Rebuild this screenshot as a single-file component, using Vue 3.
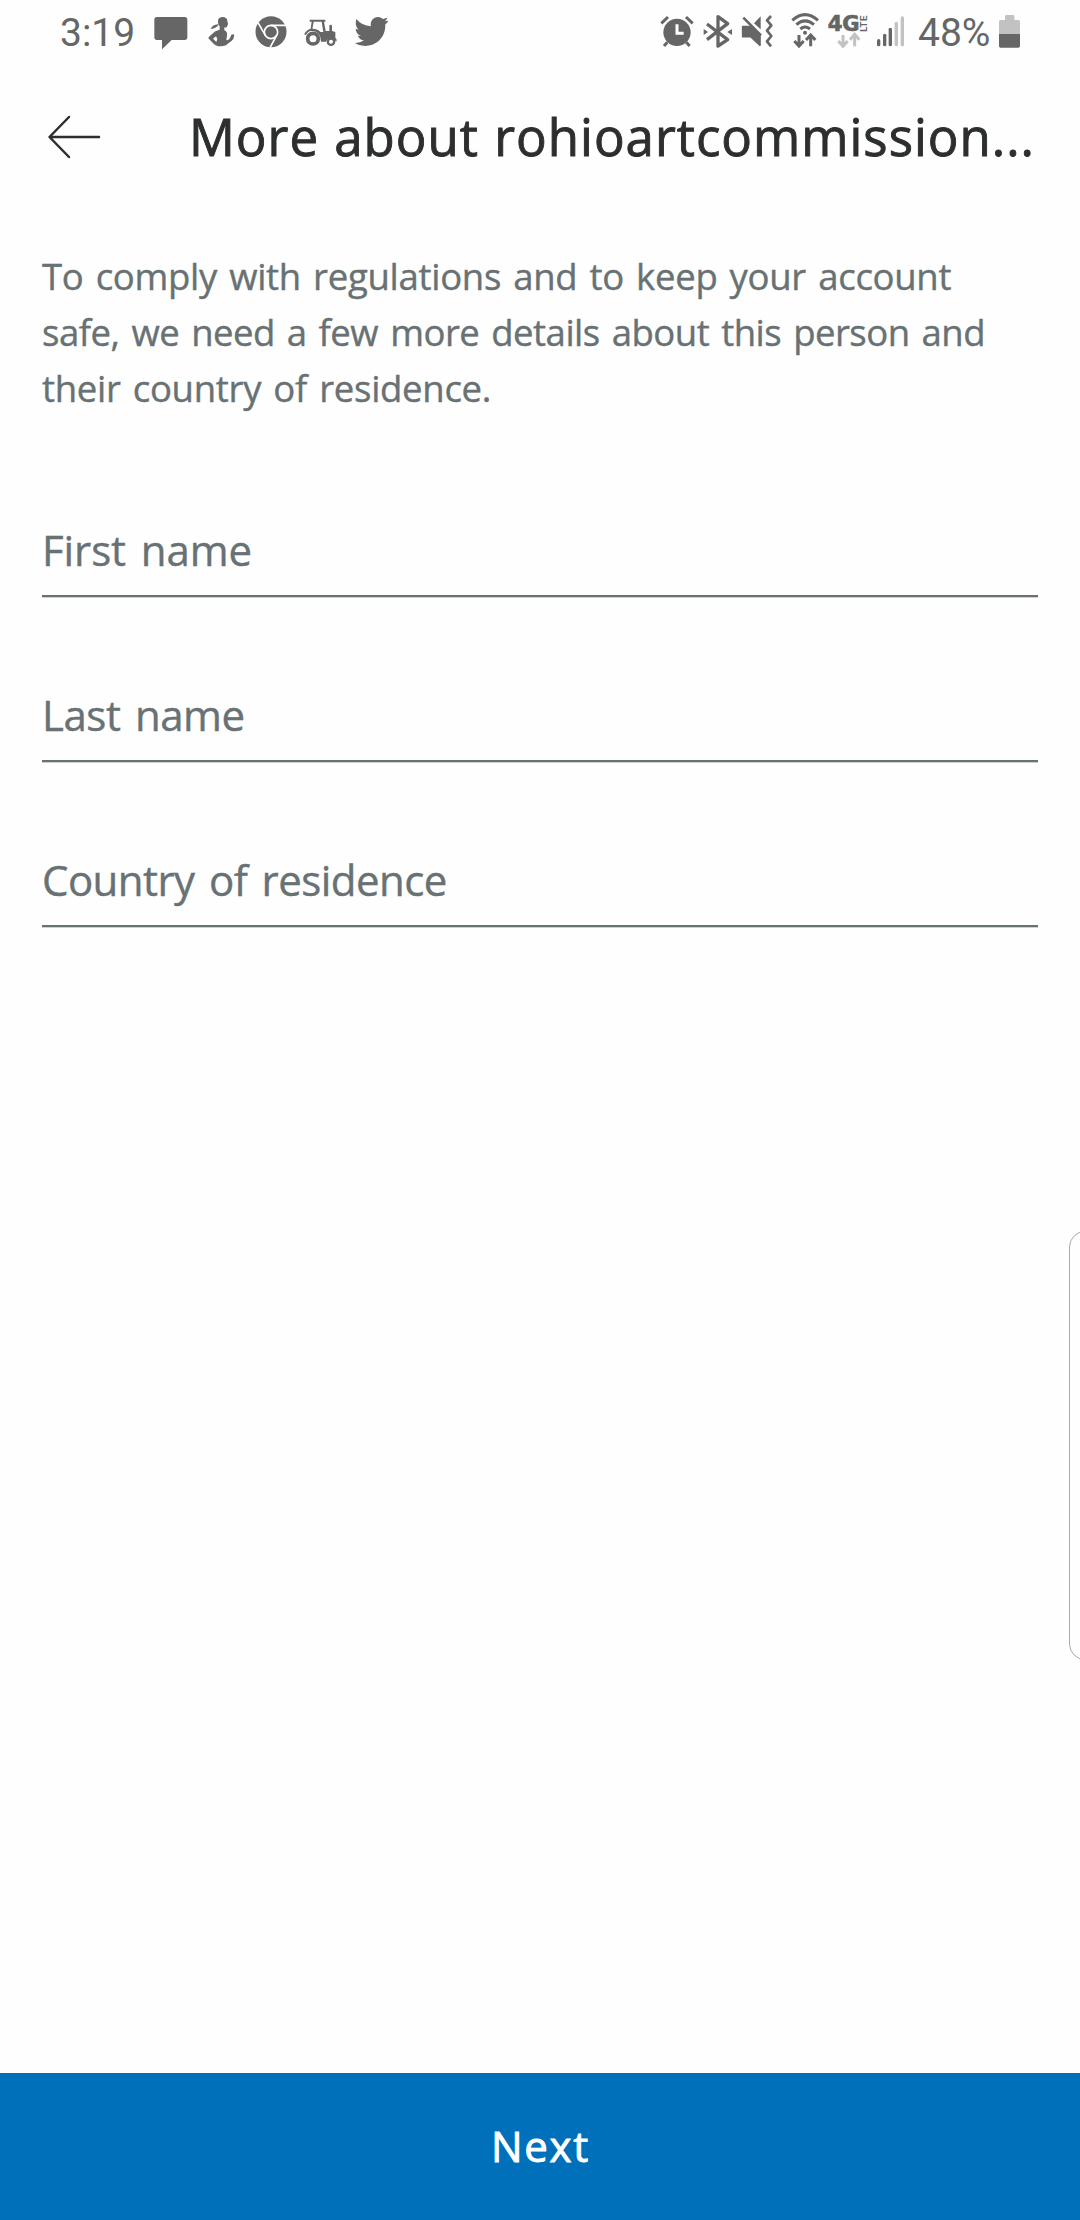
<script setup>
import { reactive } from "vue";

const form = reactive({
  firstName: "",
  lastName: "",
  country: "",
});

const fields = [
  { key: "firstName", label: "First name" },
  { key: "lastName", label: "Last name" },
  { key: "country", label: "Country of residence" },
];

// signal bars: x, top, active
const bars = [
  { x: 176, y: 122, on: true },
  { x: 194, y: 106, on: true },
  { x: 211, y: 88, on: true },
  { x: 229, y: 70, on: false },
  { x: 247, y: 54, on: false },
];
</script>

<template>
  <div class="screen">
    <!-- status bar -->
    <div class="status">
      <div class="group left">
        <span class="time">3:19</span>
        <!-- message -->
        <svg width="46" height="66" viewBox="324 0 138 198">
          <path d="M351 51H434Q442 51 442 59V112Q442 120 434 120H395L366 148V120H351Q343 120 343 112V59Q343 51 351 51Z" />
        </svg>
        <!-- person -->
        <svg width="46" height="66" viewBox="462 0 138 198">
          <path d="M534 62C534 47 562 47 562 62L564 72L561 80Q556 84 553 82L553 91Q563 95 561 106L559 121Q568 121 571 112L574 104Q580 101 583 106L580 117Q574 125 566 129Q557 139 543 139Q526 139 518 128L505 115L507 110L526 94L539 89L539 79Q533 74 534 62ZM528 109L519 116L529 126L532 117Z" />
          <path d="M537 72Q530 86 512 87Q518 74 534 73Z" />
        </svg>
        <!-- chrome -->
        <svg width="57" height="66" viewBox="30 0 171 198">
          <circle cx="123" cy="95" r="46.500" />
          <g fill="none" stroke="#fff" stroke-width="5">
            <circle cx="123" cy="96" r="20" />
            <path d="M123 76H168M106 106L84 68M140 106L120 143" />
          </g>
        </svg>
        <!-- tractor -->
        <svg width="48" height="66" viewBox="201 0 144 198">
          <path d="M239 59H286V65H282L287 93H298V77Q298 74 302 74T306 77V93L316 96V113Q321 117 320 124H317A16 16 0 0 0 288 125H273Q272 90 241 92L245 65H239ZM251 65L247 88Q263 87 271 96H280L275 65Z" fill-rule="evenodd" />
          <path d="M225 104Q232 88 250 89Q266 91 272 105" fill="none" stroke="#666" stroke-width="6" />
          <circle cx="249" cy="116" r="16" fill="#fff" stroke="#666" stroke-width="11" />
          <circle cx="303" cy="125" r="9.500" fill="#fff" stroke="#666" stroke-width="7" />
        </svg>
        <!-- bird -->
        <svg width="55" height="66" viewBox="345 0 165 198">
          <path d="M379 57Q395 77 423 79C419 64 430 51 444 51Q452 51 459 57L472 53Q470 60 464 64L475 62Q472 69 466 73C467 113 439 138 405 138Q388 138 374 129Q390 130 402 121Q388 119 384 107H393Q378 102 377 86L386 89Q373 78 379 57Z" />
        </svg>
      </div>
      <div class="group">
        <!-- alarm -->
        <svg width="48" height="66" viewBox="0 0 144 198">
          <g stroke="#666" stroke-width="9" fill="none">
            <path d="M34 70L54 51M108 51L128 70M52 127L42 138M109 127L119 138" />
          </g>
          <circle cx="81" cy="97" r="41" />
          <path d="M81 73V100H101" fill="none" stroke="#fff" stroke-width="9" />
        </svg>
        <!-- bluetooth -->
        <svg width="38" height="66" viewBox="144 0 114 198">
          <path d="M171 72L233 119L204 138V50L233 71L171 119" fill="none" stroke="#666" stroke-width="10" stroke-linejoin="round" />
          <path d="M161 87L174 96L161 105ZM246 87L232 96L246 105Z" />
        </svg>
        <!-- muted / vibrate -->
        <svg width="44" height="66" viewBox="258 0 132 198">
          <path d="M312 70L332 49V88Z" />
          <path d="M278 80H305L330 106V136L302 110H278Z" stroke="#666" stroke-width="5" stroke-linejoin="round" />
          <path d="M280 53L333 106" fill="none" stroke="#666" stroke-width="8" />
          <path d="M363 48L351 61L364 76L351 92L364 108L351 124L363 139" fill="none" stroke="#666" stroke-width="8" stroke-linejoin="round" />
        </svg>
        <!-- wifi -->
        <svg width="45" height="66" viewBox="390 0 135 198">
          <g fill="none" stroke="#666" stroke-width="9">
            <path d="M427 61Q465 27 504 61M439 74Q465 51 492 74M451 87Q465 75 480 87" />
            <path d="M447 105V136M433 123L447 138L461 123M482 139V108M468 120L482 105L496 120" />
          </g>
          <circle cx="465" cy="98" r="6" />
        </svg>
        <!-- 4G LTE -->
        <svg width="46" height="66" viewBox="15 0 138 198">
          <text class="net" x="23" y="94" textLength="96" lengthAdjust="spacingAndGlyphs">4G</text>
          <text class="lte" transform="translate(140 96) rotate(-90)" textLength="49" lengthAdjust="spacingAndGlyphs">LTE</text>
          <path d="M69 105V137M55 123L69 139L83 123M104 139V106M90 119L104 103L118 119" fill="none" stroke="#c2c2c2" stroke-width="9" />
        </svg>
        <!-- signal -->
        <svg width="39" height="66" viewBox="153 0 117 198">
          <line
            v-for="bar in bars"
            :key="bar.x"
            :x1="bar.x"
            :x2="bar.x"
            :y1="bar.y"
            y2="134"
            :stroke="bar.on ? '#666' : '#c2c2c2'"
            stroke-width="10"
            stroke-linecap="round"
          />
        </svg>
        <span class="percent">48%</span>
        <!-- battery -->
        <svg width="27" height="66" viewBox="528 0 81 198">
          <path d="M555 60V49Q555 45 559 45H579Q583 45 583 49V60H595Q600 60 600 65V102H537V65Q537 60 542 60Z" fill="#c2c2c2" />
          <path d="M537 102H600V138Q600 143 595 143H542Q537 143 537 138Z" />
        </svg>
      </div>
    </div>

    <!-- title bar -->
    <header class="bar">
      <svg class="back" width="54" height="46" viewBox="0 0 54 46">
        <path d="M52 23H3M22 3L2.500 23L22 43" fill="none" stroke="#2c2e2f" stroke-width="2.500" stroke-linecap="round" stroke-linejoin="round" />
      </svg>
      <h1>More about rohioartcommission...</h1>
    </header>

    <main>
      <p class="intro">
        <span class="loose">To comply with regulations and to keep your account</span><br />
        <span>safe, we need a few more details about this person and</span><br />
        <span class="loose">their country of residence.</span>
      </p>
      <input
        v-for="field in fields"
        :key="field.key"
        v-model="form[field.key]"
        :class="field.key"
        type="text"
        :placeholder="field.label"
      />
    </main>

    <button class="next">Next</button>

    <!-- edge panel handle -->
    <div class="edge"></div>
  </div>
</template>

<style>
body {
  margin: 0;
}
</style>

<style scoped>
.screen {
  position: relative;
  display: flex;
  flex-direction: column;
  width: 1080px;
  height: 2220px;
  overflow: hidden;
  background-color: #fefefe;
  font-family: "Open Sans", "Noto Sans", sans-serif;
}
.status {
  display: flex;
  justify-content: space-between;
  height: 66px;
  padding-right: 57px;
  color: #666;
  font-family: Roboto, sans-serif;
  font-size: 39px;
  line-height: 66px;
}
.group {
  display: flex;
}
svg {
  display: block;
  flex: none;
  fill: #666;
}
.time {
  width: 88px;
  padding-left: 60px;
}
.percent {
  width: 78px;
  padding-left: 8px;
}
.net {
  font: 700 64px "DejaVu Sans", sans-serif;
  stroke: #666;
  stroke-width: 2px;
}
.lte {
  font: 700 27px Roboto, sans-serif;
}
.bar {
  display: flex;
  align-items: center;
  height: 142px;
  padding-left: 47px;
}
h1 {
  margin: 0 0 2px 88px;
  color: #2c2e2f;
  font-size: 51px;
  font-weight: 400;
  letter-spacing: 1px;
  word-spacing: 1px;
  line-height: 70px;
  white-space: nowrap;
  -webkit-text-stroke: 0.9px #2c2e2f;
}
main {
  flex: 1;
  display: flex;
  flex-direction: column;
  padding: 40px 42px 0;
  color: #687173;
}
.intro {
  height: 168px;
  margin: 0 0 89px;
  font-size: 36.5px;
  letter-spacing: -0.5px;
  word-spacing: 3px;
  line-height: 56px;
  white-space: nowrap;
  -webkit-text-stroke: 0.4px #687173;
}
.loose {
  letter-spacing: -0.29px;
}
input {
  box-sizing: border-box;
  width: 100%;
  height: 92px;
  margin: 0 0 73px;
  padding: 0 0 2px;
  border: none;
  border-bottom: 2px solid #687173;
  outline: none;
  background: none;
  box-shadow: 0 1px #cdd1d1;
  color: #2c2e2f;
  font-family: inherit;
  font-size: 42px;
  letter-spacing: -0.45px;
  word-spacing: 4px;
}
.firstName {
  letter-spacing: -0.1px;
}
.country {
  letter-spacing: -0.55px;
}
input::placeholder {
  color: #687173;
  opacity: 1;
  -webkit-text-stroke: 0.4px #687173;
}
.next {
  height: 147px;
  padding: 0 0 2px 1px;
  border: none;
  background-color: #0070ba;
  color: white;
  font-family: inherit;
  font-size: 42px;
  letter-spacing: 1.7px;
  cursor: pointer;
  -webkit-text-stroke: 0.9px white;
}
.edge {
  position: absolute;
  top: 1231px;
  right: -21px;
  width: 30px;
  height: 427px;
  border: 1px solid #aaa;
  border-radius: 16px;
}
</style>
